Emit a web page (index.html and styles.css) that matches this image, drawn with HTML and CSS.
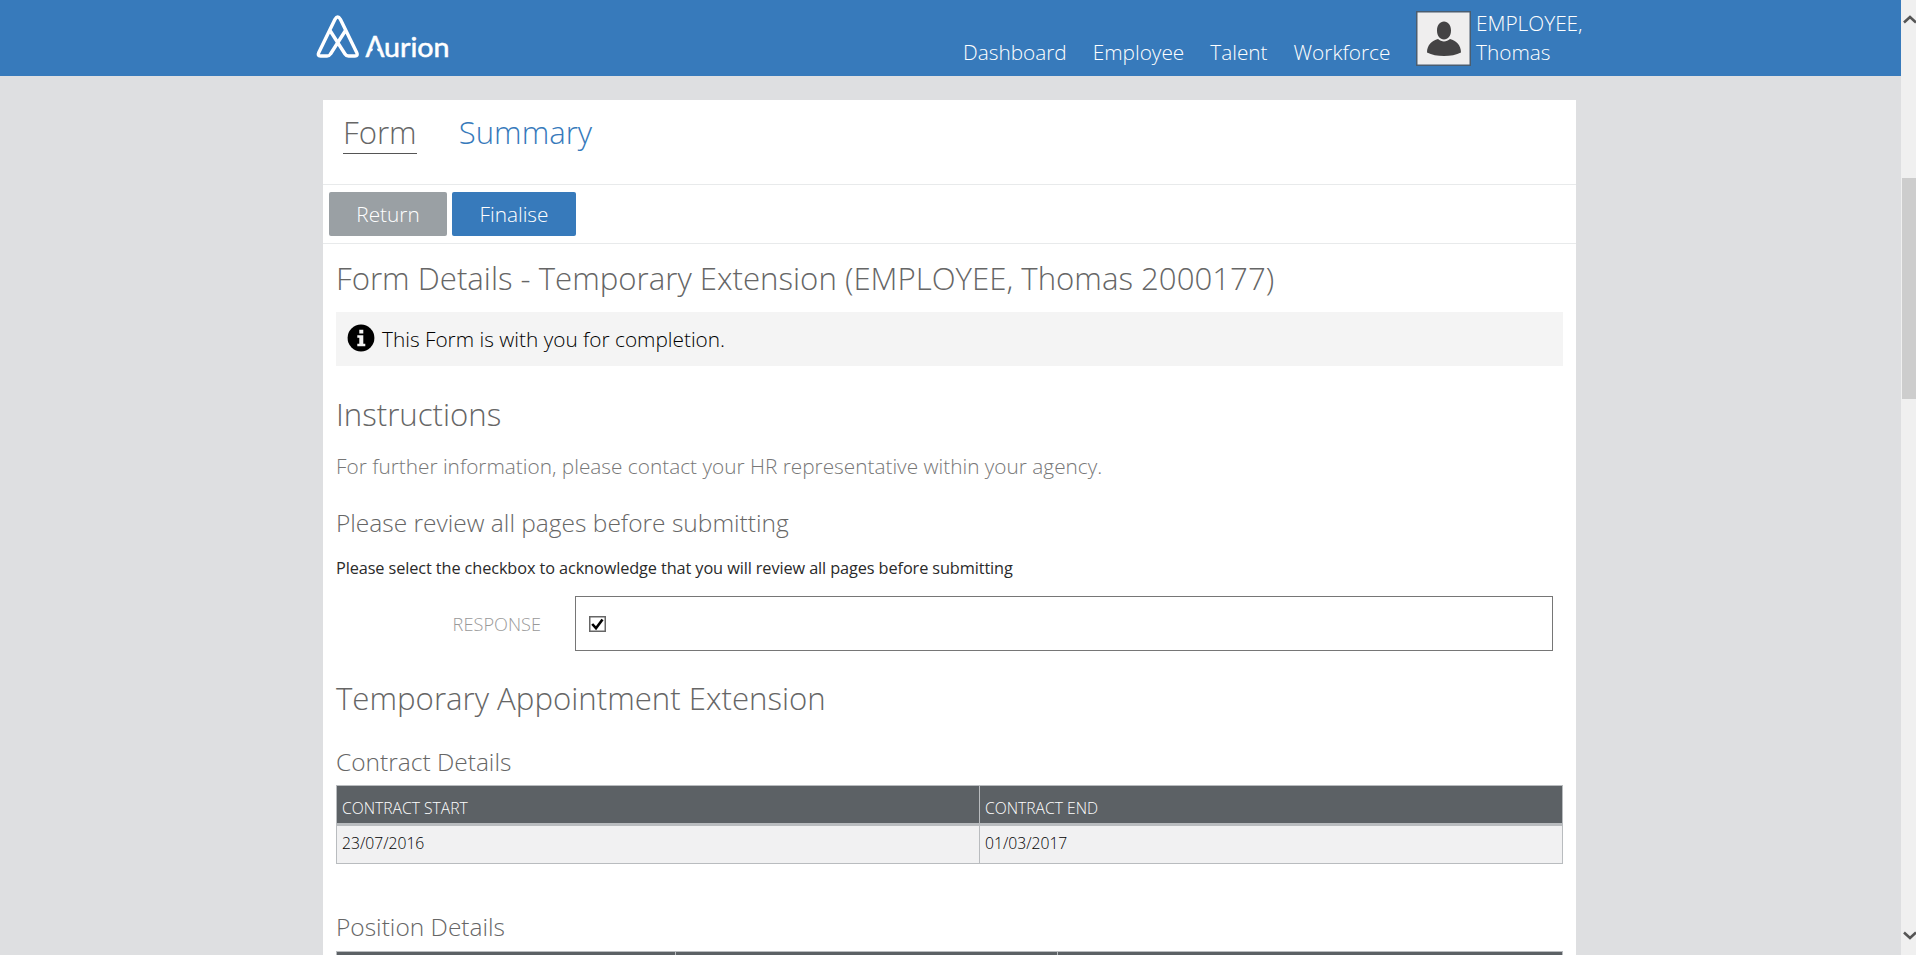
FILE: index.html
```html
<!DOCTYPE html>
<html lang="en">
<head>
<meta charset="utf-8">
<title>Aurion - Form Details</title>
<link rel="stylesheet" href="styles.css">
</head>
<body>
<div class="window">
  <div class="page">
    <header class="topbar">
      <svg class="logo" width="140" height="50" viewBox="312 12 140 50">
        <path class="logo-mark" d="M345.500 30.500L330.500 54Q329.300 56 327 56H320.500Q317.200 56 318.700 52.800L335 19.300Q337.700 14.800 340.400 19.300L356.800 52.800Q358.300 56 355 56H348.500Q346.300 56 345 54L330 30.500"/>
        <text class="logo-text" y="56.500"><tspan x="365.500" class="logo-cap">A</tspan><tspan x="384" textLength="65.500" lengthAdjust="spacingAndGlyphs">urion</tspan></text>
        <path class="logo-cut" d="M371.500 53L375 43.500L378.500 53Z"/>
      </svg>
      <nav class="nav">
        <a>Dashboard</a><a>Employee</a><a>Talent</a><a>Workforce</a>
      </nav>
      <div class="user">
        <svg class="avatar" width="55" height="55" viewBox="0 0 55 55">
          <rect x=".75" y=".75" width="53.500" height="53.500" fill="#efeeee" stroke="#4a5d70" stroke-width="1.500"/>
          <path fill="#444344" d="M28 10.500c4 0 7 3.700 7 9s-3 9-7 9-7-3.700-7-9 3-9 7-9zM22 28c3.500 3.200 8.500 3.200 12 0 6 1.500 11 6 11 13.500-9 4.700-25 4.700-34 0C11 34 16 29.500 22 28z"/>
        </svg>
        <div class="user-name">EMPLOYEE,<br>Thomas</div>
      </div>
    </header>

    <main class="card">
      <div class="tabs">
        <a class="tab tab-active">Form</a>
        <a class="tab">Summary</a>
      </div>
      <div class="actions">
        <button class="btn btn-grey">Return</button>
        <button class="btn btn-blue">Finalise</button>
      </div>
      <div class="content">
        <h1 class="title">Form Details - Temporary Extension (EMPLOYEE, Thomas 2000177)</h1>
        <div class="notice">
          <svg width="28" height="28" viewBox="0 0 28 28">
            <circle cx="14" cy="14" r="13.400" fill="#000"/>
            <path fill="#f4f4f4" d="M12.300 5.800h4v3.600h-4zM10.300 11.300h6v8.400h2v2.500h-8v-2.500h2v-5.900h-2z"/>
          </svg>
          <span>This Form is with you for completion.</span>
        </div>
        <h2 class="title instructions">Instructions</h2>
        <p class="lead">For further information, please contact your HR representative within your agency.</p>
        <h3 class="subtitle review">Please review all pages before submitting</h3>
        <p class="note">Please select the checkbox to acknowledge that you will review all pages before submitting</p>
        <div class="field">
          <label class="field-label">RESPONSE</label>
          <div class="field-box">
            <svg width="17" height="16" viewBox="0 0 17 16">
              <rect x=".75" y=".75" width="15.500" height="14.500" fill="#fff" stroke="#666" stroke-width="1.500"/>
              <path d="M3.200 8L7 12.200L13.500 3.500" fill="none" stroke="#000" stroke-width="2.600"/>
            </svg>
          </div>
        </div>
        <h2 class="title extension">Temporary Appointment Extension</h2>
        <h3 class="subtitle contract">Contract Details</h3>
        <div class="table two-col">
          <div class="th">CONTRACT START</div><div class="th">CONTRACT END</div>
          <div class="td">23/07/2016</div><div class="td">01/03/2017</div>
        </div>
        <h3 class="subtitle position">Position Details</h3>
        <div class="table three-col">
          <div class="th"></div><div class="th"></div><div class="th"></div>
        </div>
      </div>
    </main>
  </div>
  <div class="scrollbar">
    <svg width="15" height="12" viewBox="0 0 15 12"><path d="M3 9.500L9 4L15 9.500" fill="none" stroke="#555" stroke-width="2.600"/></svg>
    <div class="thumb"></div>
    <svg width="15" height="12" viewBox="0 0 15 12"><path d="M3 2.500L9 8L15 2.500" fill="none" stroke="#555" stroke-width="2.600"/></svg>
  </div>
</div>
</body>
</html>
```

FILE: styles.css
```css
* { box-sizing: border-box; }
body {
  margin: 0;
  font-family: "Open Sans", sans-serif;
  font-weight: 300;
  font-size: 20.8px;
  color: #000;
}
.window { display: flex; height: 955px; overflow: hidden; }
.page { flex: 1; height: 955px; overflow: hidden; background: #dedfe1; }

/* Top bar */
.topbar {
  display: flex;
  height: 76px;
  padding-left: 312px;
  background: #377abb;
  color: #fff;
}
.logo { margin-top: 12px; }
.logo-mark { fill: none; stroke: #fff; stroke-width: 3.4; stroke-linejoin: round; }
.logo-text { font-family: Lato, sans-serif; font-weight: 400; font-size: 26px; fill: #fff; stroke: #fff; stroke-width: .5; }
.logo-cap { font-size: 28px; }
.logo-cut { fill: #377abb; }
.nav {
  display: flex;
  gap: 26px;
  width: 427px;
  margin-left: 511px;
  padding-top: 38px;
  font-size: 20.8px;
  line-height: 29px;
}
.user { display: flex; gap: 5px; margin-left: 26px; padding-top: 9px; }
.avatar { margin-top: 2px; }
.user-name { font-size: 20.8px; line-height: 29px; }

/* Card */
.card { width: 1253px; height: 900px; margin: 24px 0 0 323px; background: #fff; }
.tabs {
  display: flex;
  gap: 42px;
  height: 85px;
  padding: 12px 0 0 20px;
  border-bottom: 1px solid #e8eaeb;
}
.tab { height: 42px; font-size: 31.2px; line-height: 40px; color: #377abb; }
.tab-active { color: #666; border-bottom: 1px solid #555; }
.actions {
  display: flex;
  gap: 5px;
  height: 59px;
  padding: 7px 0 0 6px;
  border-bottom: 1px solid #e8eaeb;
}
.btn {
  height: 44px;
  padding: 0;
  border: 0;
  border-radius: 2px;
  font: inherit;
  font-size: 20.8px;
  line-height: 44px;
  color: #fff;
}
.btn-grey { width: 118px; background: #9aa0a4; }
.btn-blue { width: 124px; background: #377abb; }
.content { padding: 14px 13px 0; }

/* Text blocks */
.title { margin: 0; font-weight: 300; font-size: 31.2px; line-height: 40px; color: #666; }
.subtitle { margin: 0; font-weight: 300; font-size: 24.5px; line-height: 34px; color: #666; }
.notice {
  display: flex;
  align-items: center;
  gap: 7px;
  height: 54px;
  margin-top: 14px;
  padding: 0 0 2px 11px;
  background: #f4f4f4;
}
.notice span { padding-top: 2px; }
.instructions { margin-top: 28px; }
.lead { margin: 17px 0 0; line-height: 30px; color: #777; }
.review { margin-top: 25px; }
.note { margin: 16px 0 0; font-weight: 400; font-size: 16.3px; letter-spacing: -.1px; line-height: 24px; color: #2a2a2a; }
.field { display: flex; align-items: center; gap: 34px; margin-top: 16px; }
.field-label { width: 205px; text-align: right; font-size: 18.2px; color: #999; }
.field-box {
  display: flex;
  align-items: center;
  width: 978px;
  height: 55px;
  padding-left: 13px;
  border: 1px solid #767676;
}
.extension { margin-top: 27px; }
.contract { margin-top: 27px; }
.position { margin-top: 46px; }

/* Tables */
.table {
  display: grid;
  gap: 1px;
  margin-top: 6px;
  padding: 1px;
  background: #b9bcbf;
  color: #000;
  font-size: 15.7px;
}
.two-col { grid-template-columns: 642px 1fr; grid-template-rows: 37px 37px; row-gap: 3px; height: 79px; }
.three-col { grid-template-columns: 338px 381px 1fr; grid-template-rows: 37px; margin-top: 7px; }
.th { padding: 9px 0 0 5px; background: #5c6165; color: #fff; line-height: 26px; }
.td { padding: 3px 0 0 5px; background: #f1f1f2; line-height: 28px; }

/* Scrollbar */
.scrollbar {
  display: flex;
  flex-direction: column;
  width: 15px;
  padding: 13px 0;
  background: #f0f0f0;
}
.thumb { height: 221px; margin: 153px 0 auto 1px; background: #cdcdcd; }
```
